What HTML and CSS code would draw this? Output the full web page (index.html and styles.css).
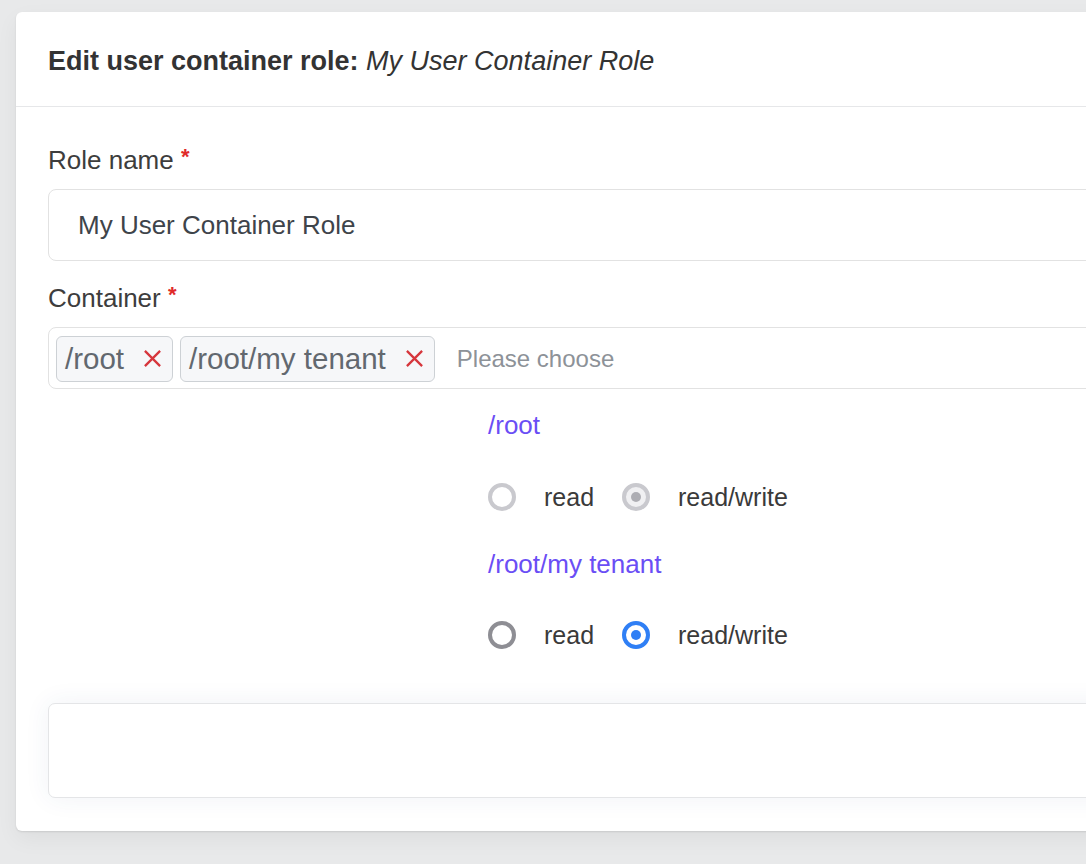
FILE: index.html
```html
<!DOCTYPE html>
<html lang="en">
<head>
<meta charset="utf-8">
<title>Edit user container role</title>
<link rel="stylesheet" href="styles.css">
</head>
<body>
<div class="card">
  <div class="card-header">
    <h1 class="title"><strong>Edit user container role:</strong> <em>My User Container Role</em></h1>
  </div>
  <div class="card-body">
    <div class="field">
      <label class="label">Role name <span class="req">*</span></label>
      <div class="input">My User Container Role</div>
    </div>
    <div class="field field-second">
      <label class="label">Container <span class="req">*</span></label>
      <div class="select">
        <span class="tag">/root <svg class="tag-x" viewBox="0 0 20 20"><path d="M2 2 L18 18 M18 2 L2 18"/></svg></span>
        <span class="tag">/root/my tenant <svg class="tag-x" viewBox="0 0 20 20"><path d="M2 2 L18 18 M18 2 L2 18"/></svg></span>
        <span class="placeholder">Please choose</span>
      </div>
    </div>
    <div class="perms">
      <div class="perm-name">/root</div>
      <div class="radio-row">
        <span class="radio radio-disabled"></span><span class="radio-label">read</span>
        <span class="radio radio-disabled radio-checked"></span><span class="radio-label">read/write</span>
      </div>
      <div class="perm-name perm-name-next">/root/my tenant</div>
      <div class="radio-row radio-row-last">
        <span class="radio"></span><span class="radio-label">read</span>
        <span class="radio radio-active radio-checked"></span><span class="radio-label">read/write</span>
      </div>
    </div>
    <div class="footer-box"></div>
  </div>
</div>
</body>
</html>
```
FILE: styles.css
```css
html, body {
  margin: 0;
  padding: 0;
}
body {
  background: #e8e9ea;
  overflow: hidden;
  height: 864px;
  padding: 12px 0 0 16px;
  box-sizing: border-box;
  font-family: "Liberation Sans", Arial, Helvetica, sans-serif;
}
.card {
  width: 1200px;
  background: #ffffff;
  border-radius: 6px;
  box-shadow: 0 1px 2px rgba(0, 0, 0, 0.10), 0 8px 22px rgba(0, 0, 0, 0.05);
}
.card-header {
  box-sizing: border-box;
  border-bottom: 1px solid #e6e7e9;
  display: flex;
  align-items: center;
  padding: 4px 32px 0 32px;
  height: 95px;
}
.title {
  margin: 0;
  font-size: 27px;
  font-weight: normal;
  color: #333333;
  line-height: 32px;
}
.title strong {
  font-weight: bold;
}
.title em {
  font-style: italic;
}
.card-body {
  padding: 37px 32px 33px 32px;
}
.field {
  display: flex;
  flex-direction: column;
}
.field-second {
  margin-top: 21px;
}
.label {
  font-size: 26px;
  line-height: 32px;
  height: 32px;
  color: #3d3d3d;
  margin-bottom: 13px;
}
.req {
  color: #e02a2a;
  font-size: 22px;
  font-weight: bold;
  line-height: 0;
  vertical-align: 5px;
}
.input {
  height: 72px;
  box-sizing: border-box;
  border: 1px solid #e2e2e2;
  border-radius: 8px;
  display: flex;
  align-items: center;
  padding-left: 29px;
  font-size: 26px;
  color: #3e444a;
}
.select {
  height: 62px;
  box-sizing: border-box;
  border: 1px solid #e2e2e2;
  border-radius: 8px;
  display: flex;
  align-items: center;
  padding: 1px 7px 0 7px;
  gap: 7px;
}
.tag {
  height: 46px;
  box-sizing: border-box;
  display: flex;
  align-items: center;
  gap: 19px;
  padding: 0 10px 0 8px;
  border: 1px solid #cdd1d5;
  border-radius: 6px;
  background: #f6f7f9;
  font-size: 29.5px;
  color: #62686f;
}
.tag-x {
  width: 19px;
  height: 19px;
  fill: none;
  stroke: #d6363c;
  stroke-width: 2.4;
}
.placeholder {
  margin-left: 15px;
  font-size: 24px;
  color: #8d9298;
}
.perms {
  margin-left: 440px;
  margin-top: 20px;
}
.perm-name {
  font-size: 26px;
  line-height: 32px;
  color: #6a4ef5;
}
.perm-name-next {
  margin-top: 35px;
}
.radio-row {
  display: flex;
  align-items: center;
  height: 32px;
  margin-top: 40px;
}
.radio-row-last {
  margin-top: 39px;
}
.radio {
  width: 28px;
  height: 28px;
  box-sizing: border-box;
  border-radius: 50%;
  border: 4px solid #8e8e94;
  background: #ffffff;
  display: flex;
  align-items: center;
  justify-content: center;
  flex: none;
}
.radio-disabled {
  border-color: #c9c9ce;
}
.radio-active {
  border-color: #2f7ff5;
}
.radio-checked::after {
  content: "";
  width: 10px;
  height: 10px;
  border-radius: 50%;
  background: #2f7ff5;
}
.radio-disabled.radio-checked {
  background: #f0f0f2;
}
.radio-disabled.radio-checked::after {
  background: #adadb3;
}
.radio-label {
  font-size: 25px;
  color: #3a3a3a;
  margin: 0 28px 0 28px;
}
.footer-box {
  margin-top: 52px;
  height: 95px;
  box-sizing: border-box;
  border: 1px solid #e4e5e7;
  border-radius: 7px;
  background: #ffffff;
  box-shadow: 0 0 26px rgba(40, 70, 130, 0.07);
}
```
